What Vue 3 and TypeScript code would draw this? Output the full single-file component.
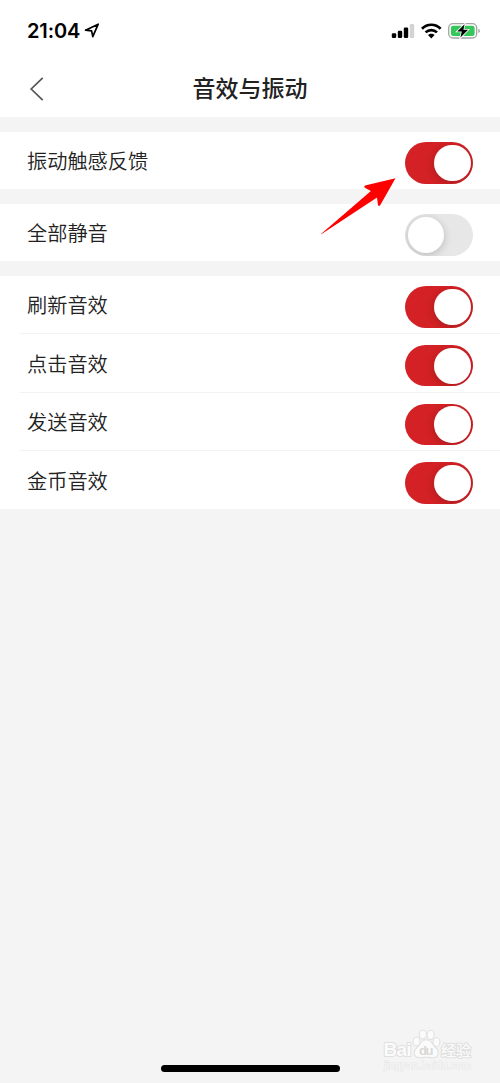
<script setup lang="ts">
import { ref } from 'vue'

interface Setting {
  label: string
  on: boolean
}

const groups = ref<Setting[][]>([
  [{ label: '振动触感反馈', on: true }],
  [{ label: '全部静音', on: false }],
  [
    { label: '刷新音效', on: true },
    { label: '点击音效', on: true },
    { label: '发送音效', on: true },
    { label: '金币音效', on: true },
  ],
])
</script>

<template>
  <div class="screen">
    <header class="top">
      <div class="status">
        <span class="time">21:04</span>
        <svg class="location" width="16" height="16" viewBox="0 0 16 16">
          <path d="M1.5 8.2 14.2 2.2 8.8 14.7 7.6 8.9Z" fill="none" stroke="#000" stroke-width="1.7" stroke-linejoin="round" />
        </svg>
        <svg class="indicators" width="92" height="20" viewBox="0 0 92 20">
          <rect x="1.8" y="13.2" width="4.4" height="4.8" rx="1.2" />
          <rect x="7.8" y="10.7" width="4.4" height="7.3" rx="1.2" />
          <rect x="13.8" y="7.5" width="4.4" height="10.5" rx="1.2" />
          <rect x="19.8" y="4" width="4.4" height="14" rx="1.2" fill="#d3d3d3" />
          <g fill="none" stroke="#000" stroke-width="2.7">
            <path d="M32 8.8C37.2 3.4 45.4 3.4 50.6 8.8" />
            <path d="M35.6 12.4C38.8 9.3 43.8 9.3 47 12.4" />
          </g>
          <path d="M41.3 18.4 38 15.1C39.9 13.2 42.7 13.2 44.6 15.1Z" />
          <rect x="58.7" y="3.7" width="28" height="14.3" rx="4.2" fill="none" stroke="#a5a5a5" stroke-width="1.3" />
          <rect x="60.9" y="5.8" width="23.7" height="10.1" rx="2.2" fill="#35c759" />
          <path d="M88.3 8.7Q90 9.4 90 10.9T88.3 13.1Z" fill="#a5a5a5" />
          <path d="M74.6 4.3 67.2 11.5H71.8L70.4 17.6 78.1 9.7H73.4Z" stroke="#fff" stroke-width="1.6" paint-order="stroke" />
        </svg>
      </div>
      <div class="nav">
        <svg class="back" width="16" height="26" viewBox="0 0 16 26">
          <path d="M13.7 1.9 2.2 13 13.7 24.1" fill="none" stroke="#555" stroke-width="1.7" />
        </svg>
        <h1>音效与振动</h1>
      </div>
    </header>

    <main>
      <section v-for="(group, index) in groups" :key="index" class="group">
        <div v-for="item in group" :key="item.label" class="row">
          <span class="label">{{ item.label }}</span>
          <button
            class="switch"
            :class="{ on: item.on }"
            role="switch"
            :aria-checked="item.on"
            :aria-label="item.label"
            @click="item.on = !item.on"
          >
            <span class="knob"></span>
          </button>
        </div>
      </section>
    </main>

    <svg class="arrow" width="78" height="60" viewBox="0 0 78 60">
      <path d="M1 59 50.9 15.9 44.8 12.7Q43.5 11.4 45 10.4L75.5 3.3 60.3 30Q58.8 32 58 30L57 22.6 1.3 59.3Z" fill="#f00" />
    </svg>

    <div class="watermark">
      <svg width="94" height="46" viewBox="0 0 94 46">
        <g fill="#fbfbfb" stroke="#dfdfdf" stroke-width="2" stroke-linejoin="round" paint-order="stroke">
          <text class="brand" x="1.5" y="29" textLength="28">Bai</text>
          <path d="M44.3 13.2C39 13.2 38.2 18.4 35.4 20.9 30.4 25.2 33.2 30.6 38.4 30.2 42.5 29.6 46 29.6 50 30.2 55.4 30.8 58.2 25.2 53.4 20.9 50.4 18.4 49.4 13.2 44.3 13.2Z" />
          <ellipse cx="34.6" cy="14.4" rx="2.9" ry="3.9" />
          <ellipse cx="40.9" cy="7.5" rx="3" ry="4.1" />
          <ellipse cx="48.6" cy="7.9" rx="3" ry="4.1" />
          <ellipse cx="54.5" cy="15" rx="2.9" ry="3.9" />
          <text class="cn" x="59" y="29.2" textLength="30">经验</text>
        </g>
        <text class="du" x="37" y="27.6" textLength="14.5">du</text>
        <text class="domain" x="2" y="42" textLength="87">jingyan.baidu.com</text>
      </svg>
    </div>
    <div class="home-bar"></div>
  </div>
</template>

<style>
body {
  margin: 0;
}
</style>

<style scoped>
.screen {
  position: relative;
  box-sizing: border-box;
  height: 1083px;
  overflow: hidden;
  background: #f4f4f4;
  color: #222;
  font-family: "Liberation Sans", "Noto Sans CJK SC", sans-serif;
}
.top {
  height: 117.3px;
  background: #fff;
}
.status {
  display: flex;
  align-items: center;
  height: 60px;
  padding: 0 18px 0 27px;
}
.time {
  width: 54px;
  color: #000;
  font: 600 20px/24px Inter, sans-serif;
  letter-spacing: -0.1px;
  padding-top: 2px;
}
.location {
  margin-left: 3px;
}
.indicators {
  margin-left: auto;
}
.nav {
  display: grid;
  grid-template-columns: 30px 1fr 30px;
  align-items: center;
  height: 57px;
  padding: 0 29px;
}
h1 {
  margin: -3px 0 0;
  text-align: center;
  font: 500 23px/34px "Noto Sans CJK SC", sans-serif;
}
main {
  display: flex;
  flex-direction: column;
  gap: 14.8px;
  padding-top: 14.3px;
}
.group {
  background: #fff;
}
.row {
  display: flex;
  box-sizing: border-box;
  justify-content: space-between;
  align-items: flex-start;
  height: 57.3px;
  padding: 10.5px 27px 0;
}
.row + .row {
  height: 58.7px;
  padding-top: 11.8px;
  background: linear-gradient(#f3f3f3, #f3f3f3) 20px 0 / 100% 1px no-repeat;
}
.label {
  padding-top: 3.8px;
  font: 350 20.2px/30px "Noto Sans CJK SC", sans-serif;
}
.switch {
  display: flex;
  box-sizing: border-box;
  width: 68px;
  height: 41.5px;
  padding: 2.7px;
  border: 0;
  border-radius: 21px;
  overflow: hidden;
  background: #e7e7e7;
}
.switch.on {
  justify-content: flex-end;
  padding-right: 2.5px;
  background: #d32125;
}
.knob {
  width: 36.3px;
  height: 36.3px;
  border-radius: 50%;
  background: #fff;
  box-shadow: 0 2px 8px rgba(0, 0, 0, 0.2);
}
.arrow {
  position: absolute;
  left: 319.5px;
  top: 175px;
}
.watermark {
  position: absolute;
  left: 382px;
  top: 1027px;
}
.watermark svg {
  display: block;
}
.brand {
  font: 700 19px "Liberation Sans", sans-serif;
}
.cn {
  font: 500 15px "Noto Sans CJK SC", sans-serif;
}
.du {
  fill: #d8d8d8;
  font: 700 13px "Liberation Sans", sans-serif;
}
.domain {
  fill: #f8f8f8;
  stroke: #e6e6e6;
  stroke-width: 1px;
  paint-order: stroke;
  font: 400 10.5px "Liberation Sans", sans-serif;
}
.home-bar {
  position: absolute;
  left: 161px;
  bottom: 11px;
  width: 178.5px;
  height: 7px;
  border-radius: 4px;
  background: #000;
}
</style>
